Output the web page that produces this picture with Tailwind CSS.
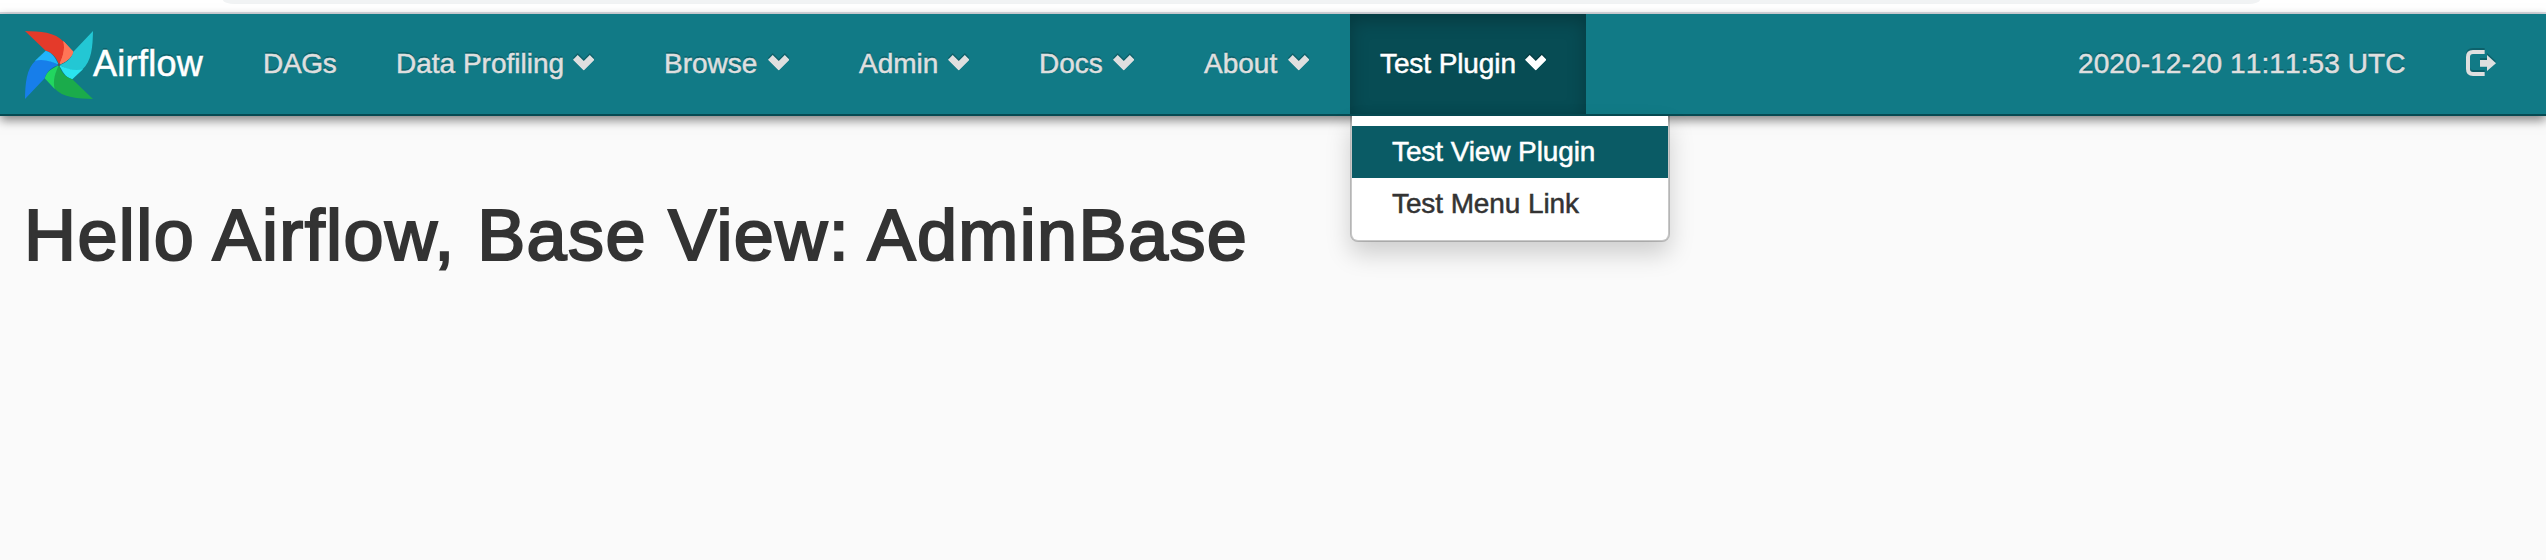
<!DOCTYPE html>
<html lang="en">
<head>
<meta charset="utf-8">
<title>Airflow</title>
<script src="https://cdn.jsdelivr.net/npm/@tailwindcss/browser@4"></script>
</head>
<body class="h-[560px] overflow-hidden bg-[#fafafa] font-['Liberation_Sans',Arial,sans-serif] text-[28px] text-[#333]">
<svg class="hidden">
  <symbol id="chev" viewBox="0 0 64 46"><path d="M0 14 14 0 32 18 50 0 64 14 32 46z" fill="currentColor"/></symbol>
  <symbol id="logout" viewBox="0 0 90 78"><path d="M56 6H21Q6 6 6 21V57Q6 72 21 72H56" fill="none" stroke="currentColor" stroke-width="12"/><path d="M42 30H63V15L90 40 63 63V50H42z" fill="currentColor"/></symbol>
</svg>
<div class="flex h-[14px] justify-center border-b-2 border-[#dcdde3] bg-white pr-[63px]">
  <div class="h-1 w-[2037px] bg-[#f1f3f4] [border-radius:0_0_12px_12px/0_0_4px_4px]"></div>
</div>
<nav class="relative flex h-[102px] border-b-2 border-[#064a52] bg-[#117a86] whitespace-nowrap text-[#dfdfdf] shadow-[0_4px_10px_rgba(0,0,0,0.5)] [-webkit-text-stroke:0.5px_currentColor] [text-shadow:0_-2px_0_rgba(0,0,0,0.2)]">
  <a class="flex w-[232px] items-center pl-[25px] text-[36px] tracking-[0.3px] text-white">
    <svg class="mt-[2px] h-[68px] w-[68px] shrink-0" viewBox="45 33 204 204">
      <g><path fill="#e43a2a" d="M45 33C90 34 135 36 162 66C168 90 158 115 147 135C143 118 130 98 107 92z"/><path fill="#ff7557" d="M160 63L190 95C184 118 164 125 147 135C158 112 166 90 160 63z"/></g>
      <g transform="rotate(90 147 135)"><path fill="#23c7d4" d="M45 33C90 34 135 36 162 66C168 90 158 115 147 135C143 118 130 98 107 92z"/><path fill="#2ae4f0" d="M160 63L190 95C184 118 164 125 147 135C158 112 166 90 160 63z"/></g>
      <g transform="rotate(180 147 135)"><path fill="#1bab4b" d="M45 33C90 34 135 36 162 66C168 90 158 115 147 135C143 118 130 98 107 92z"/><path fill="#22d65f" d="M160 63L190 95C184 118 164 125 147 135C158 112 166 90 160 63z"/></g>
      <g transform="rotate(270 147 135)"><path fill="#177eea" d="M45 33C90 34 135 36 162 66C168 90 158 115 147 135C143 118 130 98 107 92z"/><path fill="#21b4fb" d="M160 63L190 95C184 118 164 125 147 135C158 112 166 90 160 63z"/></g>
      <path fill="#ff7557" d="M160 63L190 95C184 118 164 125 147 135C158 112 166 90 160 63z"/>
      <circle cx="147" cy="134" r="4" fill="#4e5a5c"/>
    </svg>
    <span>Airflow</span>
  </a>
  <a class="flex w-[134px] items-center pl-[31px] tracking-[-0.3px]">DAGs</a>
  <a class="flex w-[268px] items-center justify-between pr-[40px] pl-[30px]">Data Profiling<svg class="-mt-[2px] h-[15.5px] w-[21.5px] drop-shadow-[0_-2px_0_rgba(0,0,0,0.2)]"><use href="#chev"/></svg></a>
  <a class="flex w-[195px] items-center justify-between pr-[40px] pl-[30px]">Browse<svg class="-mt-[2px] h-[15.5px] w-[21.5px] drop-shadow-[0_-2px_0_rgba(0,0,0,0.2)]"><use href="#chev"/></svg></a>
  <a class="flex w-[180px] items-center justify-between pr-[40px] pl-[30px]">Admin<svg class="-mt-[2px] h-[15.5px] w-[21.5px] drop-shadow-[0_-2px_0_rgba(0,0,0,0.2)]"><use href="#chev"/></svg></a>
  <a class="flex w-[165px] items-center justify-between pr-[40px] pl-[30px]">Docs<svg class="-mt-[2px] h-[15.5px] w-[21.5px] drop-shadow-[0_-2px_0_rgba(0,0,0,0.2)]"><use href="#chev"/></svg></a>
  <a class="flex w-[176px] items-center justify-between pr-[41px] pl-[30px]">About<svg class="-mt-[2px] h-[15.5px] w-[21.5px] drop-shadow-[0_-2px_0_rgba(0,0,0,0.2)]"><use href="#chev"/></svg></a>
  <div class="relative w-[236px]">
    <a class="flex h-[100px] items-center justify-between bg-[#074c54] pr-[40px] pl-[30px] tracking-[-0.1px] text-white shadow-[inset_0_6px_18px_rgba(0,0,0,0.25)]">Test Plugin<svg class="-mt-[2px] h-[15.5px] w-[21.5px] drop-shadow-[0_-2px_0_rgba(0,0,0,0.2)]"><use href="#chev"/></svg></a>
    <div class="absolute top-[102px] left-0 w-[320px] rounded-b-lg border-2 border-t-0 border-black/20 bg-white bg-clip-padding pt-[10px] pb-[10px] tracking-[-0.1px] text-[#333] shadow-[0_12px_24px_rgba(0,0,0,0.175)] [text-shadow:none]">
      <a class="flex h-[52px] items-center bg-[#0a5b65] pl-[40px] text-white">Test View Plugin</a>
      <a class="flex h-[52px] items-center pl-[40px]">Test Menu Link</a>
    </div>
  </div>
  <div class="ml-auto flex items-center pr-[50px]">
    <span class="w-[388px] tracking-[0.1px] [font-kerning:none]">2020-12-20 11:11:53 UTC</span>
    <svg class="-mt-[2px] h-[26px] w-[30px] drop-shadow-[0_-2px_0_rgba(0,0,0,0.2)]"><use href="#logout"/></svg>
  </div>
</nav>
<main class="px-[24px] pt-[79px]">
  <h1 class="text-[72px] leading-[80px] tracking-[1.4px] whitespace-nowrap [-webkit-text-stroke:2.2px_#333]">Hello Airflow, Base View: AdminBase</h1>
</main>
</body>
</html>
